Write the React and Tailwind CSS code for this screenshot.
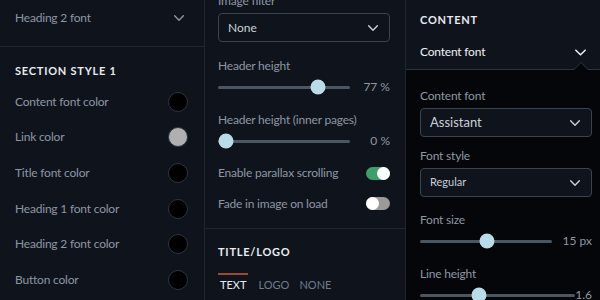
// Site style editor — three panel columns.

const font = { fontFamily: "Lato, 'Open Sans', sans-serif" };

function Chevron({ className = "" }) {
  return (
    <svg viewBox="0 0 16 16" className={className} fill="none" stroke="currentColor" strokeWidth="1.6">
      <path d="M3 5.5 L8 10.5 L13 5.5" strokeLinecap="round" strokeLinejoin="round" />
    </svg>
  );
}

function Swatch({ color }) {
  return (
    <span
      className="w-[20px] h-[20px] rounded-full border border-[#2c3542]"
      style={{ background: color }}
    />
  );
}

function Slider({ pct, value, trackW = 132 }) {
  return (
    <div className="flex items-center">
      <div className="relative h-[3px] bg-[#4b5663] rounded-full" style={{ width: trackW }}>
        <span
          className="absolute top-1/2 -translate-y-1/2 -translate-x-1/2 w-[15px] h-[15px] rounded-full bg-[#b9dce8]"
          style={{ left: `${pct}%` }}
        />
      </div>
      <span className="ml-auto text-[12px] text-[#8d97a3]">{value}</span>
    </div>
  );
}

function Toggle({ on }) {
  return (
    <span
      className={`flex items-center w-[24px] h-[13px] rounded-full ${on ? "bg-[#3f9e6b] justify-end" : "bg-[#9a9a9a] justify-start"}`}
    >
      <span className="w-[13px] h-[13px] rounded-full bg-white" />
    </span>
  );
}

function Select({ text, textClass }) {
  return (
    <div className="h-[29px] flex items-center justify-between px-[9px] border border-[#3a4451] rounded-[4px] bg-[#0f131c]">
      <span className={textClass}>{text}</span>
      <Chevron className="w-[14px] h-[14px] text-[#c9d1da]" />
    </div>
  );
}

const label = "text-[12px] tracking-[-0.2px] leading-[18px] text-[#8d97a3]";
const heading = "text-[11px] font-bold tracking-[0.07em] text-[#e8ecf0] leading-[18px]";

const swatches = [
  ["Content font color", "#000"],
  ["Link color", "#b0b0b0"],
  ["Title font color", "#000"],
  ["Heading 1 font color", "#000"],
  ["Heading 2 font color", "#000"],
  ["Button color", "#000"],
];

export default function App() {
  return (
    <div className="w-[600px] h-[300px] overflow-hidden flex bg-[#0f131c]" style={font}>
      {/* left column */}
      <div className="w-[205px] shrink-0 border-r border-[#1f2631]">
        <div className="h-[47px] border-b border-[#1f2631] flex items-start justify-between pl-[15px] pr-[18px] pt-[9px]">
          <span className={label}>Heading 2 font</span>
          <Chevron className="w-[14px] h-[14px] mt-[2px] text-[#8d97a3]" />
        </div>
        <div className="pl-[15px] pr-[16px] pt-[15px]">
          <div className={heading}>SECTION STYLE 1</div>
          <div className="mt-[4px]">
            {swatches.map(([text, c]) => (
              <div key={text} className="h-[35.6px] flex items-center justify-between">
                <span className={label}>{text}</span>
                <Swatch color={c} />
              </div>
            ))}
          </div>
        </div>
      </div>

      {/* middle column */}
      <div className="w-[201px] shrink-0 border-r border-[#1f2631]">
        <div className="pl-[13px] pr-[15px] -mt-[8px]">
          <div className={label}>Image filter</div>
          <div className="mt-[3px]">
            <Select text="None" textClass="text-[12px] text-[#c9d1da]" />
          </div>
          <div className={`mt-[15px] ${label}`}>Header height</div>
          <div className="mt-[2px] h-[20px] flex flex-col justify-center">
            <Slider pct={76} value="77 %" />
          </div>
          <div className={`mt-[14px] ${label}`}>Header height (inner pages)</div>
          <div className="mt-[2px] h-[20px] flex flex-col justify-center">
            <Slider pct={6} value="0 %" />
          </div>
          <div className="mt-[7px] h-[30px] flex items-center justify-between">
            <span className={label}>Enable parallax scrolling</span>
            <Toggle on />
          </div>
          <div className="h-[31px] flex items-center justify-between">
            <span className={label}>Fade in image on load</span>
            <Toggle on={false} />
          </div>
        </div>
        <div className="mt-[9px] border-t border-[#1f2631] pl-[13px] pt-[14px]">
          <div className={heading}>TITLE/LOGO</div>
          <div className="mt-[12px] flex gap-[10px] text-[11px]">
            <span className="border-t-2 border-[#9a4a30] pt-[2px] px-[2px] text-[#e8ecf0]">TEXT</span>
            <span className="pt-[4px] text-[#6f7c8a]">LOGO</span>
            <span className="pt-[4px] text-[#6f7c8a]">NONE</span>
          </div>
        </div>
      </div>

      {/* right column */}
      <div className="flex-1 flex flex-col">
        <div className="h-[70px] shrink-0 pl-[14px] pr-[12px] pt-[11px] relative border-b border-[#2b3440]">
          <div className={heading}>CONTENT</div>
          <div className="mt-[14px] flex items-center justify-between">
            <span className="text-[12px] tracking-[-0.2px] text-[#eef1f4]">Content font</span>
            <Chevron className="w-[15px] h-[15px] text-[#eef1f4]" />
          </div>
          <span className="absolute -bottom-[1px] right-[11px] w-0 h-0 border-x-[8px] border-x-transparent border-b-[8px] border-b-[#2b3440]" />
          <span className="absolute -bottom-[1px] right-[12px] w-0 h-0 border-x-[7px] border-x-transparent border-b-[7px] border-b-[#050609]" />
        </div>
        <div className="flex-1 bg-[#050609] pl-[14px] pr-[8px] pt-[17px]">
          <div className={label}>Content font</div>
          <div className="mt-[3px]">
            <Select text="Assistant" textClass="text-[13px] text-[#c9d1da]" />
          </div>
          <div className={`mt-[10px] ${label}`}>Font style</div>
          <div className="mt-[3px]">
            <Select text="Regular" textClass="text-[11px] text-[#c9d1da]" />
          </div>
          <div className={`mt-[14px] ${label}`}>Font size</div>
          <div className="mt-[2px] h-[20px] flex flex-col justify-center">
            <Slider pct={51} value="15 px" trackW={132} />
          </div>
          <div className={`mt-[14px] ${label}`}>Line height</div>
          <div className="mt-[2px] h-[20px] flex flex-col justify-center">
            <Slider pct={38} value="1.6" trackW={155} />
          </div>
        </div>
      </div>
    </div>
  );
}
